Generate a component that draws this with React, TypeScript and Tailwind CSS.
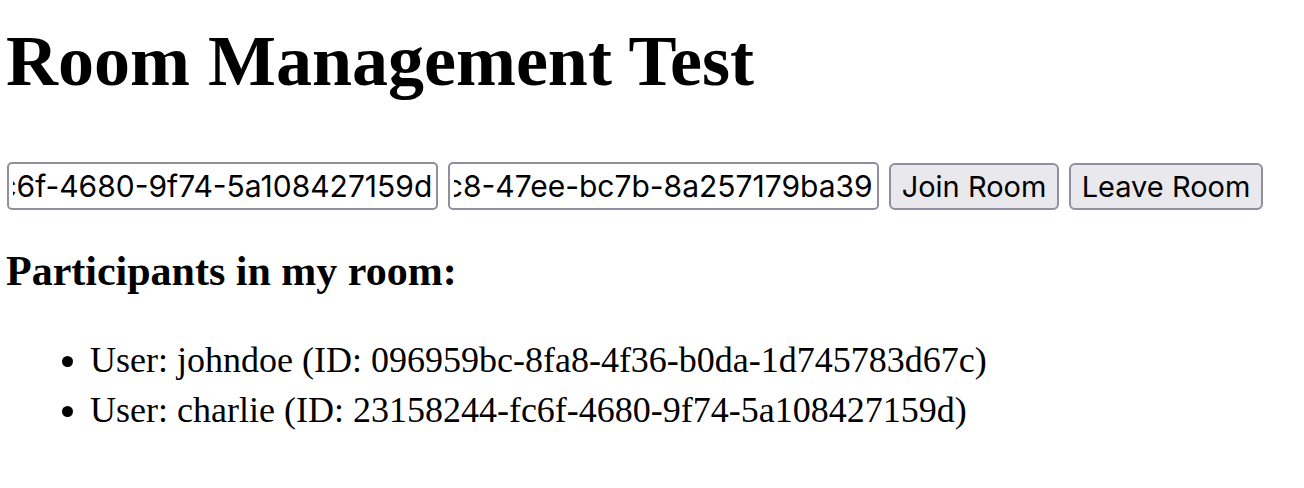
import { useEffect, useRef } from "react";

const participants = [
  { name: "johndoe", id: "096959bc-8fa8-4f36-b0da-1d745783d67c" },
  { name: "charlie", id: "23158244-fc6f-4680-9f74-5a108427159d" },
];

function IdInput({ value }: { value: string }) {
  const ref = useRef<HTMLInputElement>(null);

  // the ids are scrolled to their end, as after typing
  useEffect(() => {
    if (ref.current) ref.current.scrollLeft = ref.current.scrollWidth;
  }, [value]);

  return (
    <input
      ref={ref}
      type="text"
      defaultValue={value}
      className="w-[431px] h-[48px] px-[4px] border-2 border-[#8f8f9d] rounded-[5px] bg-white text-black text-[30px] font-['Inter',sans-serif] outline-none"
    />
  );
}

export default function App() {
  return (
    <div className="pl-[6px] bg-white text-black font-['Liberation_Serif',serif] min-h-[488px]">
      <h1 className="pt-[21px] text-[72px] leading-[80px] font-bold">Room Management Test</h1>

      <div className="mt-[61px] flex items-center gap-[10px] pl-[1px]">
        <IdInput value="23158244-fc6f-4680-9f74-5a108427159d" />
        <IdInput value="5f3a9b12-e4c8-47ee-bc7b-8a257179ba39" />
        <button className="w-[170px] h-[47px] border-2 border-[#8f8f9d] rounded-[6px] bg-[#e9e9ed] text-black text-[29px] font-['Inter',sans-serif]">
          Join Room
        </button>
        <button className="w-[194px] h-[47px] border-2 border-[#8f8f9d] rounded-[6px] bg-[#e9e9ed] text-black text-[29px] font-['Inter',sans-serif]">
          Leave Room
        </button>
      </div>

      <h3 className="mt-[37px] text-[42px] leading-[48px] font-bold">Participants in my room:</h3>

      <ul className="mt-[40px] pl-[84px] list-disc text-[36px] leading-[50px]">
        {participants.map((p) => (
          <li key={p.id}>
            User: {p.name} (ID: {p.id})
          </li>
        ))}
      </ul>
    </div>
  );
}
